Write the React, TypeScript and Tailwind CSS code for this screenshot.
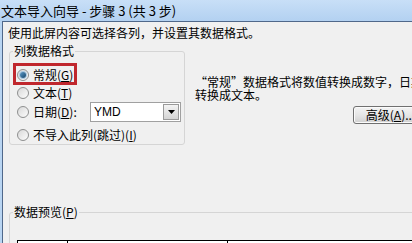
import React from "react";

const cjk = { fontFamily: '"Noto Sans CJK SC", "Noto Sans", sans-serif' };

function Radio({ checked }: { checked?: boolean }) {
  return (
    <span className="w-[12px] h-[12px] rounded-full border border-[#8e8f8f] bg-gradient-to-br from-[#d8d8d8] to-[#fdfdfd] flex items-center justify-center shrink-0">
      {checked && (
        <span className="w-[6px] h-[6px] rounded-full bg-gradient-to-br from-[#5d9bc9] to-[#15466c] ring-1 ring-[#a9c8e0]" />
      )}
    </span>
  );
}

function U({ c }: { c: string }) {
  return <span className="underline underline-offset-1">{c}</span>;
}

export default function App() {
  return (
    <div
      className="w-[412px] h-[243px] overflow-hidden bg-[#b9d5f2] text-black text-[12px]"
      style={cjk}
    >
      <div className="h-[21px] flex items-center pl-[1px] bg-gradient-to-b from-[#c8dff7] to-[#b3d1f1] text-[13px] leading-[15px] whitespace-nowrap">
        文本导入向导 - 步骤 3 (共 3 步)
      </div>
      <div className="ml-[2px] h-[222px] border-l border-t border-[#50688a] bg-[#f0f0f0]">
        <div className="pl-[5px] pt-[4px] leading-[14px] whitespace-nowrap">
          使用此屏内容可选择各列，并设置其数据格式。
        </div>
        <div className="flex mt-[4px]">
          <fieldset className="ml-[6px] w-[176px] shrink-0 border border-[#d5d5d5] rounded-[3px] px-0 pb-0">
            <legend className="ml-[3px] px-[1px] leading-[14px]">列数据格式</legend>
            <div className="pl-[7px] pt-[7px] flex flex-col leading-[14px]">
              <div className="relative h-[19px] flex items-center gap-[4px]">
                <Radio checked />
                <span>
                  常规(<U c="G" />)
                </span>
                <div className="absolute left-[-4px] top-[-2px] w-[64px] h-[22px] border-[3px] border-[#c0272d]" />
              </div>
              <div className="h-[18px] flex items-center gap-[4px]">
                <Radio />
                <span>
                  文本(<U c="T" />)
                </span>
              </div>
              <div className="h-[20px] flex items-center gap-[4px]">
                <Radio />
                <span className="w-[53px]">
                  日期(<U c="D" />):
                </span>
                <div className="w-[91px] h-[20px] border border-[#a0a0a0] bg-white flex items-stretch">
                  <span
                    className="flex-1 flex items-center pl-[3px] text-[12px]"
                    style={{ fontFamily: '"Liberation Sans", Arial, sans-serif' }}
                  >
                    YMD
                  </span>
                  <span className="w-[16px] m-[1px] border border-[#9a9a9a] bg-gradient-to-b from-[#f4f4f4] to-[#d4d4d4] flex items-center justify-center">
                    <svg width="7" height="4" viewBox="0 0 7 4">
                      <path d="M0 0h7L3.5 4z" fill="#000" />
                    </svg>
                  </span>
                </div>
              </div>
              <div className="h-[19px] mt-[3px] flex items-center gap-[4px]">
                <Radio />
                <span className="whitespace-nowrap">
                  不导入此列(跳过)(<U c="I" />)
                </span>
              </div>
            </div>
          </fieldset>
          <div className="ml-[10px] pt-[31px] flex flex-col whitespace-nowrap leading-[13px]">
            <div>“常规”数据格式将数值转换成数字，日期值转换成日期，其余数据则</div>
            <div>转换成文本。</div>
            <button className="ml-[158px] mt-[5px] w-[75px] h-[18px] border border-[#707070] rounded-[3px] bg-gradient-to-b from-[#f3f3f3] via-[#e6e6e6] to-[#d0d0d0] text-[12px] leading-[14px] flex items-center justify-center shadow-[inset_0_0_0_1px_#fbfbfb]">
              高级(<U c="A" />)...
            </button>
          </div>
        </div>
        <fieldset className="ml-[6px] mt-[60px] w-[500px] border border-[#d5d5d5] rounded-[3px] px-0">
          <legend className="ml-[3px] px-[1px] leading-[14px]">
            数据预览(<U c="P" />)
          </legend>
          <div className="pl-[7px] pt-[21px]">
            <div className="flex h-[20px] border-t border-l border-black bg-white">
              <div className="w-[50px] border-r border-black" />
              <div className="w-[160px] border-r border-black" />
              <div className="flex-1" />
            </div>
          </div>
        </fieldset>
      </div>
    </div>
  );
}
